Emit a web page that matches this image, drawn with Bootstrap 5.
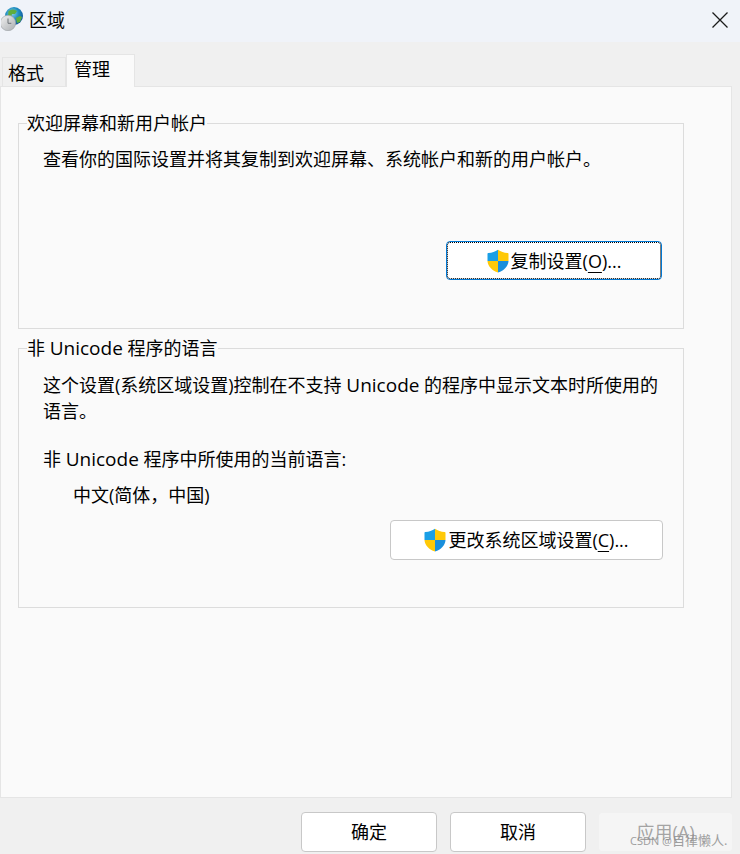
<!DOCTYPE html>
<html lang="zh-CN">
<head>
<meta charset="utf-8">
<title>区域</title>
<link href="https://cdn.jsdelivr.net/npm/bootstrap@5.3.0/dist/css/bootstrap.min.css" rel="stylesheet">
<style>
html,body{margin:0;height:854px;overflow:hidden}
body{width:740px;background:#f0f0f0;color:#000;font-family:"Open Sans","Noto Sans CJK SC",sans-serif;font-size:18px;line-height:26px;position:relative}
.titlebar{height:42px;background:#f0f3f9;padding-left:1px;gap:4px}
.titlebar span{font-size:18px;margin-top:-2px}
.globe{margin-top:-6px}
.closex{margin-left:auto;margin-right:12px;margin-bottom:3px}
.tabstrip{height:44px;align-items:flex-end;padding-left:2px;position:relative;z-index:1}
.tabitem{border:1px solid #e5e5e5;border-bottom:0;background:#f0f0f0;height:29px;width:64px;padding:0 0 0 5px;line-height:30px}
.tabitem.on{background:#fafafa;height:33px;width:69px;margin-bottom:-1px;padding-left:7px;line-height:29px}
.panel{width:732px;height:712px;background:#fafafa;border:1px solid #e5e5e5;padding:23px 0 0 17px}
.grp{width:666px;border:1px solid #dcdcdc;margin:0;padding:0 0 0 24px;min-width:0}
.grp legend{float:none;width:auto;font-size:18px;line-height:26px;margin:0 0 -2px -16px;padding:0}
.grp1{height:219px;margin-bottom:6px}
.grp2{height:273px}
.grp p{margin:0}
.uni{font-size:19px}
.btnw{display:flex;align-items:center;justify-content:center;background:#fff;border:1px solid #c8c8c8;border-radius:4px;color:#000;font-size:18px;padding:0;line-height:26px;--bs-btn-hover-bg:#fff}
.btnw svg{margin-right:2px}
.focusb{width:216px;height:39px;border-color:#0078d4;outline:1px dotted #000;outline-offset:-2px;margin:69px 0 0 403px}
.sysb{width:273px;height:40px;margin:11px 0 0 347px}
.textb1{padding-top:12px}
.textb2{padding-top:13px}
.lang{padding:0 0 0 30px;margin-top:10px!important}
.curr{margin-top:22px!important}
.sysb{margin-top:12px}
.foot{height:57px;padding:14px 0 0 301px;gap:13px}
.foot .btnw{width:136px;height:40px}
.foot .btnw.dis{width:135px;background:#f9f9f9;border-color:#f0f0f0;color:#7d7d7d;margin-left:-1px}
u{text-underline-offset:4px}
.mark-wm{position:absolute;left:630px;top:831px;font-size:13px;line-height:18px;color:#8f8f8f;opacity:.85;white-space:nowrap}
.mark-wm span{font-size:11px}
</style>
</head>
<body>
<svg width="0" height="0" class="d-block">
  <defs>
    <radialGradient id="gl" cx=".4" cy=".35" r=".7"><stop offset="0" stop-color="#8fd0e8"/><stop offset=".5" stop-color="#1f8fc0"/><stop offset="1" stop-color="#0f4f96"/></radialGradient>
    <linearGradient id="ck" x1="0" y1="0" x2="1" y2="1"><stop offset="0" stop-color="#f2f2f2"/><stop offset="1" stop-color="#a9adb0"/></linearGradient>
    <symbol id="shield" viewBox="1 0 22 24">
      <path d="M12 .8c2.800 2 6 3 9.500 3.200.7 0 1 .4 1 1V12H12z" fill="#ffc907"/>
      <path d="M12 .8C9.200 2.800 6 3.800 2.500 4c-.7 0-1 .4-1 1v7H12z" fill="#1a9fe6"/>
      <path d="M1.500 12c.3 5.500 4.500 9.500 10.500 11.500V12z" fill="#ffc907"/>
      <path d="M22.500 12c-.3 5.500-4.500 9.500-10.500 11.500V12z" fill="#1a8fdc"/>
    </symbol>
  </defs>
</svg>
<div class="titlebar d-flex align-items-center">
  <svg class="globe" width="24" height="26" viewBox="0 0 24 26">
    <circle cx="13" cy="11" r="9" fill="url(#gl)"/>
    <path d="M7.500 6c3-2 6-2 8.500 0l-2 3-3 0-1 3-3-1zM15 13l4-2 2 1-2 5-3 1z" fill="#5fae3c"/>
    <circle cx="7" cy="18" r="7.700" fill="url(#ck)" stroke="#9aa0a4" stroke-width=".6"/>
    <path d="M7 13.500v4.800h3.300" fill="none" stroke="#6f7478" stroke-width="1"/>
  </svg>
  <span>区域</span>
  <svg class="closex" width="16" height="16" viewBox="0 0 16 16"><path d="M.5.5l15 15M15.500.5l-15 15" stroke="#1a1a1a" stroke-width="1.300" fill="none"/></svg>
</div>
<div class="tabstrip d-flex">
  <div class="tabitem">格式</div>
  <div class="tabitem on">管理</div>
</div>
<div class="panel">
  <fieldset class="grp grp1">
    <legend>欢迎屏幕和新用户帐户</legend>
    <div class="textb1"><p>查看你的国际设置并将其复制到欢迎屏幕、系统帐户和新的用户帐户。</p></div>
    <button type="button" class="btn btnw focusb">
      <svg width="22" height="24"><use href="#shield"/></svg>
      <span>复制设置(<u>O</u>)...</span>
    </button>
  </fieldset>
  <fieldset class="grp grp2">
    <legend>非 <span class="uni">Unicode</span> 程序的语言</legend>
    <div class="textb2"><p>这个设置(系统区域设置)控制在不支持 <span class="uni">Unicode</span> 的程序中显示文本时所使用的<br>语言。</p></div>
    <p class="curr">非 <span class="uni">Unicode</span> 程序中所使用的当前语言:</p>
    <p class="lang">中文(简体，中国)</p>
    <button type="button" class="btn btnw sysb">
      <svg width="22" height="24"><use href="#shield"/></svg>
      <span>更改系统区域设置(<u>C</u>)...</span>
    </button>
  </fieldset>
</div>
<div class="foot d-flex">
  <button type="button" class="btn btnw">确定</button>
  <button type="button" class="btn btnw">取消</button>
  <button type="button" class="btn btnw dis" disabled>应用(A)</button>
</div>
<div class="mark-wm"><span>CSDN @</span>自律懒人.</div>
<script src="https://cdn.jsdelivr.net/npm/bootstrap@5.3.0/dist/js/bootstrap.bundle.min.js"></script>
</body>
</html>
